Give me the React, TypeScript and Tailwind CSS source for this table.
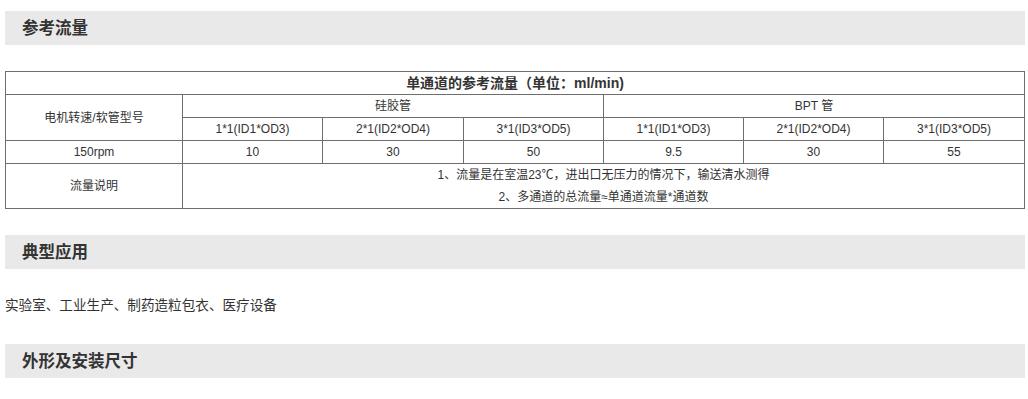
import React from 'react'

/* ── Data ── */

const SIZES = ['1*1(ID1*OD3)', '2*1(ID2*OD4)', '3*1(ID3*OD5)']
const FLOWS = ['10', '30', '50', '9.5', '30', '55']

const FONT = '"Liberation Sans", "Noto Sans CJK SC", sans-serif'

function SectionTitle({ children }: { children: React.ReactNode }) {
  return (
    <div className="h-[34px] bg-[#e9e9e9] flex items-center pl-[17px]">
      <h2 className="text-[16.5px] font-bold text-[#333]">{children}</h2>
    </div>
  )
}

const cell = 'border border-[#6e6e6e] h-[23px] p-0 text-center font-normal'

export default function App() {
  return (
    <div className="pl-[5px] pt-[11px] w-[1025px] text-[#333]" style={{ fontFamily: FONT }}>
      <SectionTitle>参考流量</SectionTitle>

      {/* Flow table */}
      <table className="mt-[26px] w-[1019px] border-collapse table-fixed text-[12px]">
        <colgroup>
          <col className="w-[177px]" />
          <col className="w-[140px]" />
          <col className="w-[141px]" />
          <col className="w-[140px]" />
          <col className="w-[140px]" />
          <col className="w-[140px]" />
          <col className="w-[141px]" />
        </colgroup>
        <tbody>
          <tr>
            <th colSpan={7} className={`${cell} !font-bold text-[14px]`}>
              单通道的参考流量（单位：ml/min)
            </th>
          </tr>
          <tr>
            <td rowSpan={2} className={cell}>电机转速/软管型号</td>
            <td colSpan={3} className={cell}>硅胶管</td>
            <td colSpan={3} className={cell}>BPT 管</td>
          </tr>
          <tr>
            {[...SIZES, ...SIZES].map((s, i) => (
              <td key={i} className={cell}>{s}</td>
            ))}
          </tr>
          <tr>
            <td className={cell}>150rpm</td>
            {FLOWS.map((f, i) => (
              <td key={i} className={cell}>{f}</td>
            ))}
          </tr>
          <tr>
            <td className={`${cell} h-[45px]`}>流量说明</td>
            <td colSpan={6} className={`${cell} h-[45px] leading-[22px]`}>
              <p>1、流量是在室温23℃，进出口无压力的情况下，输送清水测得</p>
              <p>2、多通道的总流量≈单通道流量*通道数</p>
            </td>
          </tr>
        </tbody>
      </table>

      <div className="mt-[26px]">
        <SectionTitle>典型应用</SectionTitle>
      </div>
      <p className="mt-[27px] text-[13.6px] leading-[20px]">实验室、工业生产、制药造粒包衣、医疗设备</p>

      <div className="mt-[28px]">
        <SectionTitle>外形及安装尺寸</SectionTitle>
      </div>
    </div>
  )
}
